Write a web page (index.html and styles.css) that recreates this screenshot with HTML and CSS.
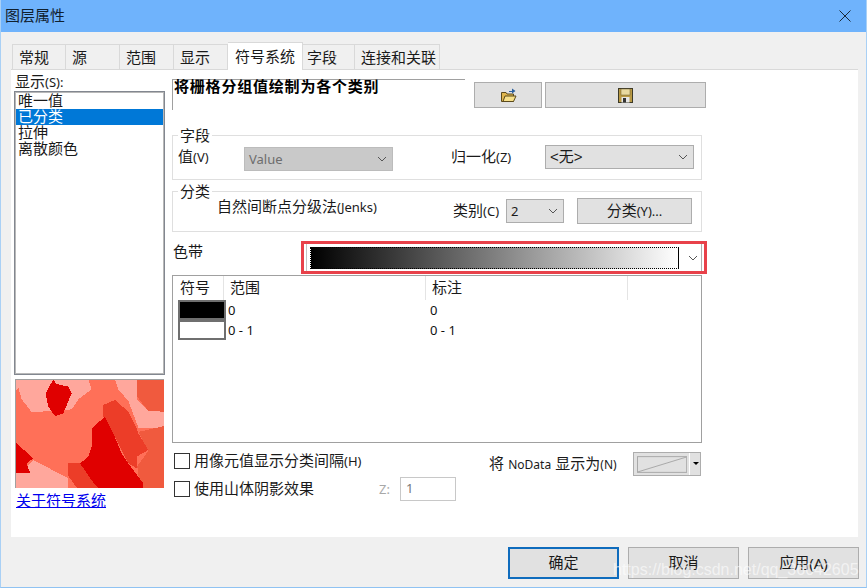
FILE: index.html
```html
<!DOCTYPE html>
<html lang="zh-CN">
<head>
<meta charset="UTF-8">
<title>图层属性</title>
<link rel="stylesheet" href="styles.css">
</head>
<body>

<svg class="defs" width="0" height="0">
    <symbol id="chevron" viewBox="0 0 10 6"><polyline points="1,1 5,5 9,1" fill="none" stroke="#555" stroke-width="1"/></symbol>
</svg>

<div class="dialog">
    <div class="titlebar">
        <span>图层属性</span>
        <svg class="close" width="12" height="12" viewBox="0 0 12 12"><path d="M0.5 0.5 L11.5 11.5 M11.5 0.5 L0.5 11.5" stroke="#1a2a3a" stroke-width="1" fill="none"/></svg>
    </div>

    <div class="tabs">
        <div class="tab">常规</div>
        <div class="tab">源</div>
        <div class="tab">范围</div>
        <div class="tab">显示</div>
        <div class="tab active">符号系统</div>
        <div class="tab tab-fields">字段</div>
        <div class="tab tab-join">连接和关联</div>
    </div>

    <div class="panel">
        <div class="left-col">
            <div class="show-label">显示<span class="en">(S):</span></div>
            <div class="listbox">
                <div class="list-item">唯一值</div>
                <div class="list-item selected">已分类</div>
                <div class="list-item">拉伸</div>
                <div class="list-item">离散颜色</div>
            </div>
            <svg class="preview" width="149" height="109" viewBox="0 0 447 325" shape-rendering="crispEdges">
                <rect width="447" height="325" fill="#ff7058"/>
                <polygon fill="#ffa79c" points="0,0 262,0 230,30 190,60 170,90 120,95 50,98 20,60 10,25 0,40"/>
                <polygon fill="#ff7058" points="220,0 262,0 310,30 270,45 230,30"/>
                <polygon fill="#ffa79c" points="300,0 365,0 365,60 400,95 447,97 447,145 370,145 340,65 310,30"/>
                <polygon fill="#f05a3e" points="365,0 447,0 447,97 400,95 365,50"/>
                <polygon fill="#e00000" points="115,2 125,14 160,22 170,42 145,102 120,110 100,82 92,42 105,17"/>
                <polygon fill="#f05a3e" points="370,158 447,140 447,325 375,325 367,260 400,215"/>
                <polygon fill="#ec3d28" points="265,77 300,62 340,97 365,147 370,162 400,212 365,232 365,267 340,252 295,162 265,112"/>
                <polygon fill="#ffa79c" points="0,282 45,282 35,262 55,242 160,297 160,325 0,325"/>
                <polygon fill="#ec3d28" points="160,252 195,252 240,317 250,325 185,325 160,290"/>
                <polygon fill="#e00000" points="270,112 230,147 230,202 220,232 195,252 240,317 250,325 385,325 385,312 340,252 320,222 295,162"/>
                <polygon fill="#e00000" points="0,187 10,197 55,237 35,252 45,280 0,280"/>
                <path d="M0 325 V0 H447" fill="none" stroke="#a0a0a0" stroke-width="3"/>
            </svg>
            <a class="about" href="#">关于符号系统</a>
        </div>

        <div class="right-col">
            <div class="desc-row">
                <div class="desc">将栅格分组值绘制为各个类别</div>
                <button class="btn btn-open">
                    <svg width="17" height="16" viewBox="0 0 17 16">
                        <path d="M1.5 5.5 H6 L7 7 H13.5 V14.5 H1.5 Z" fill="#e0b64e" stroke="#5b4a1c"/>
                        <path d="M3 14.5 L5 9 H16 L13.5 14.5 Z" fill="#f7e08a" stroke="#5b4a1c"/>
                        <path d="M9 4 H12 V1.5 L15.5 4 L12 6.5 V5 H9 Z" fill="#2a5f9e"/>
                    </svg>
                </button>
                <button class="btn btn-save">
                    <svg width="15" height="15" viewBox="0 0 15 15">
                        <rect x="0.5" y="0.5" width="14" height="14" fill="#b99a45" stroke="#3d3a28"/>
                        <rect x="3" y="1" width="9" height="6" fill="#e8d9a0" stroke="#6b5c2c" stroke-width="0.5"/>
                        <rect x="3.5" y="9" width="8" height="5.5" fill="#e6e6e6"/>
                        <rect x="5" y="10" width="3" height="4.5" fill="#333"/>
                    </svg>
                </button>
            </div>

            <fieldset class="group">
                <legend>字段</legend>
                <div class="group-row">
                    <div class="label label-value">值<span class="en">(V)</span></div>
                    <div class="combo disabled combo-value"><span class="en">Value</span><svg class="chev"><use href="#chevron"/></svg></div>
                    <div class="label label-norm">归一化<span class="en">(Z)</span></div>
                    <div class="combo combo-norm"><span>&lt;无&gt;</span><svg class="chev"><use href="#chevron"/></svg></div>
                </div>
            </fieldset>

            <fieldset class="group group-class">
                <legend>分类</legend>
                <div class="group-row group-row-class">
                    <div class="label label-method">自然间断点分级法<span class="en">(Jenks)</span></div>
                    <div class="label label-count">类别<span class="en">(C)</span></div>
                    <div class="combo combo-count"><span class="en">2</span><svg class="chev"><use href="#chevron"/></svg></div>
                    <button class="btn btn-classify">分类<span class="en">(Y)...</span></button>
                </div>
            </fieldset>

            <div class="ramp-row">
                <div class="label label-ramp">色带</div>
                <div class="ramp-box">
                    <div class="ramp-well">
                        <div class="ramp"></div>
                        <svg class="chev"><use href="#chevron"/></svg>
                    </div>
                </div>
            </div>

            <div class="classes">
                <div class="classes-head">
                    <div class="col col-symbol">符号</div>
                    <div class="col col-range">范围</div>
                    <div class="col col-text">标注</div>
                </div>
                <div class="class-row">
                    <div class="swatch swatch-black"></div>
                    <div class="cell cell-range en">0</div>
                    <div class="cell en">0</div>
                </div>
                <div class="class-row">
                    <div class="swatch"></div>
                    <div class="cell cell-range en">0 - 1</div>
                    <div class="cell en">0 - 1</div>
                </div>
            </div>

            <div class="options">
                <div class="options-left">
                    <div class="check-row">
                        <span class="checkbox"></span>
                        <span>用像元值显示分类间隔<span class="en">(H)</span></span>
                    </div>
                    <div class="check-row check-row-z">
                        <span class="checkbox"></span>
                        <span>使用山体阴影效果</span>
                        <span class="z-label en">Z:</span>
                        <span class="z-input en">1</span>
                    </div>
                </div>
                <div class="options-right">
                    <div class="label label-nodata">将 <span class="en">NoData</span> 显示为<span class="en">(N)</span></div>
                    <div class="nodata-btn">
                        <svg width="51" height="17" viewBox="0 0 51 17"><rect x="0.5" y="0.5" width="50" height="16" fill="none" stroke="#a8a8a8"/><path d="M1 16 L50 1" stroke="#a8a8a8"/></svg>
                        <span class="nodata-arrow"></span>
                    </div>
                </div>
            </div>
        </div>
    </div>

    <div class="footer">
        <button class="btn btn-foot btn-ok">确定</button>
        <button class="btn btn-foot">取消</button>
        <button class="btn btn-foot">应用<span class="en en-foot">(A)</span></button>
    </div>

    <div class="watermark">https://blog.csdn.net/qq_36042605</div>
</div>

</body>
</html>
```

FILE: styles.css
```css
* {
    box-sizing: border-box;
}
body {
    margin: 0;
    padding: 0;
    font-family: "Liberation Sans", "Noto Sans CJK SC", sans-serif;
    font-size: 15px;
    line-height: 16px;
    color: #1a1a1a;
    background-color: #f0f0f0;
}
.defs {
    display: block;
    height: 0;
}
.en {
    font-family: "Noto Sans", sans-serif;
    font-size: 13px;
    line-height: 1;
}
.dialog {
    position: relative;
    width: 867px;
    height: 588px;
    overflow: hidden;
    background-color: #f0f0f0;
    border-left: 1px solid #a9d0f5;
    border-right: 1px solid #a9d0f5;
    border-bottom: 1px solid #8fc2f2;
}

/* title */
.titlebar {
    display: flex;
    align-items: center;
    justify-content: space-between;
    height: 32px;
    margin: 0 -1px;
    padding: 0 16px 0 5px;
    background-color: #6fb3fc;
    color: #10202e;
}

/* tabs */
.tabs {
    display: flex;
    align-items: flex-end;
    height: 37px;
    padding-left: 11px;
    position: relative;
    z-index: 1;
}
.tab {
    width: 54px;
    height: 26px;
    margin-bottom: -1px;
    padding: 5px 0 0 6px;
    border: 1px solid #d9d9d9;
    border-left: 0;
    background-color: #f0f0f0;
}
.tab:first-child {
    width: 54px;
    border-left: 1px solid #d9d9d9;
}
.tab.active {
    width: 75px;
    height: 28px;
    padding: 6px 0 0 7px;
    background-color: #fff;
    border-bottom: 0;
}
.tab-fields {
    width: 52px;
    padding-left: 4px;
}
.tab-join {
    width: 85px;
}

/* panel */
.panel {
    display: flex;
    width: 847px;
    height: 468px;
    margin-left: 10px;
    padding-left: 3px;
    background-color: #fff;
    border-top: 1px solid #d9d9d9;
}
.left-col {
    width: 151px;
    margin-right: 7px;
    flex-shrink: 0;
}
.show-label {
    height: 16px;
    margin: 4px 0 1px 1px;
}
.listbox {
    height: 284px;
    padding: 1px;
    border: 1px solid #828790;
    outline: 1px solid #b8b8b8;
    outline-offset: -2px;
}
.list-item {
    padding-left: 2px;
    height: 16px;
}
.list-item.selected {
    background-color: #0078d7;
    color: #fff;
}
.preview {
    display: block;
    margin: 4px 0 0 1px;
}
.about {
    display: block;
    margin: 4px 0 0 2px;
    line-height: 18px;
    color: #0000ee;
}

.right-col {
    width: 535px;
    padding-top: 9px;
}
.desc-row {
    display: flex;
    align-items: flex-start;
    height: 31px;
    margin-bottom: 18px;
}
.desc {
    width: 293px;
    height: 31px;
    padding-left: 1px;
    border-top: 1px solid #a0a0a0;
    border-left: 1px solid #a0a0a0;
    font-weight: bold;
    line-height: 14px;
    letter-spacing: 0.8px;
    color: #000;
}
.btn {
    display: flex;
    align-items: center;
    justify-content: center;
    padding: 0;
    font: inherit;
    color: #1a1a1a;
    background-color: #e1e1e1;
    border: 1px solid #adadad;
}
.btn-open {
    width: 68px;
    height: 26px;
    margin: 3px 0 0 9px;
}
.btn-save {
    width: 161px;
    height: 26px;
    margin: 3px 0 0 3px;
}

/* groups */
.group {
    width: 530px;
    min-width: 0;
    margin: 0;
    padding: 0;
    border: 1px solid #dfdfdf;
}
.group legend {
    height: 15px;
    line-height: 15px;
    margin-left: 5px;
    padding: 0 2px;
}
.group-class {
    margin-top: 4px;
}
.group-row {
    display: flex;
    align-items: flex-start;
    height: 36px;
    padding-left: 5px;
}
.group-row-class {
    height: 32px;
    padding-left: 44px;
}
.label {
    flex-shrink: 0;
}
.label-value {
    width: 66px;
    margin-top: 6px;
}
.label-norm {
    width: 94px;
    margin: 6px 0 0 58px;
}
.label-method {
    width: 236px;
}
.label-count {
    width: 53px;
    margin-top: 4px;
}
.combo {
    display: flex;
    align-items: center;
    justify-content: space-between;
    height: 24px;
    padding: 0 5px 0 4px;
    background-color: #e1e1e1;
    border: 1px solid #adadad;
}
.combo.disabled {
    background-color: #c9c9c9;
    border-color: #bcbcbc;
    color: #6d6d6d;
}
.combo-value {
    width: 149px;
    margin-top: 4px;
}
.combo-norm {
    width: 149px;
    margin-top: 2px;
}
.combo-count {
    width: 58px;
}
.chev {
    display: block;
    width: 10px;
    height: 6px;
}
.btn-classify {
    width: 115px;
    height: 26px;
    margin: -1px 0 0 13px;
}

/* colour ramp */
.ramp-row {
    display: flex;
    align-items: flex-start;
    height: 33px;
    margin-top: 9px;
}
.label-ramp {
    width: 129px;
    margin-top: 3px;
    padding-left: 1px;
}
.ramp-box {
    width: 406px;
    height: 33px;
    padding: 0 2px;
    border: 3px solid #e8414a;
}
.ramp-well {
    display: flex;
    align-items: center;
    width: 396px;
    height: 27px;
    padding-left: 3px;
    border-left: 1px solid #c4c4c4;
    border-right: 1px solid #b0b0b0;
}
.ramp {
    width: 369px;
    height: 22px;
    margin-right: 9px;
    background: linear-gradient(to right, #000, #fff);
    border: 1px dotted #000;
}

/* class table */
.classes {
    width: 530px;
    height: 168px;
    margin-top: 1px;
    border: 1px solid #a0a0a0;
}
.classes-head {
    display: grid;
    grid-template-columns: 51px 202px 202px 1px;
    height: 24px;
}
.col {
    height: 24px;
    padding: 4px 0 0 7px;
    border-right: 1px solid #e4e4e4;
}
.col-range {
    padding-left: 6px;
}
.col-text {
    padding-left: 6px;
}
.class-row {
    display: grid;
    grid-template-columns: 48px 203px 1fr;
    align-items: center;
    height: 20px;
    padding-left: 5px;
}
.swatch {
    height: 20px;
    background-color: #fff;
    border: 2px solid #6f6f6f;
}
.swatch-black {
    background-color: #000;
}
.class-row + .class-row .swatch {
    margin-top: -1px;
}
.cell {
    padding-left: 1px;
    color: #111;
}
.cell-range {
    padding-left: 2px;
}

/* bottom options */
.options {
    display: flex;
    width: 530px;
}
.options-left {
    width: 284px;
    padding-top: 10px;
}
.check-row {
    display: flex;
    align-items: center;
    gap: 4px;
    height: 16px;
    padding-left: 2px;
}
.check-row-z {
    height: 24px;
    margin-top: 8px;
}
.checkbox {
    width: 16px;
    height: 16px;
    border: 1px solid #333;
    background-color: #fff;
}
.z-label {
    margin: 0 6px 0 auto;
    color: #a8a8a8;
}
.z-input {
    width: 56px;
    height: 24px;
    padding: 4px 0 0 5px;
    border: 1px solid #c8c8c8;
    color: #777;
}
.options-right {
    display: flex;
    justify-content: space-between;
    width: 212px;
    margin-left: 33px;
    padding-top: 9px;
}
.label-nodata {
    line-height: 24px;
}
.label-nodata .en {
    font-size: 12px;
}
.nodata-btn {
    display: flex;
    align-items: center;
    width: 68px;
    height: 24px;
    padding-left: 3px;
    background-color: #e1e1e1;
    border: 1px solid #adadad;
}
.nodata-arrow {
    width: 11px;
    height: 22px;
    margin-left: 2px;
    border-left: 1px solid #fff;
    position: relative;
}
.nodata-arrow::after {
    content: "";
    position: absolute;
    left: 3px;
    top: 9px;
    border-left: 3px solid transparent;
    border-right: 3px solid transparent;
    border-top: 3px solid #000;
}

/* footer */
.footer {
    display: flex;
    justify-content: flex-end;
    gap: 9px;
    height: 50px;
    padding: 10px 7px 0 0;
}
.btn-foot {
    width: 111px;
    height: 32px;
}
.btn-ok {
    border: 2px solid #0f6cbd;
}
.en-foot {
    font-size: 15px;
}
.watermark {
    position: absolute;
    left: 612px;
    top: 561px;
    font-family: "Liberation Sans", sans-serif;
    font-size: 16px;
    line-height: 18px;
    color: rgba(255, 255, 255, 0.6);
    white-space: nowrap;
}
```
